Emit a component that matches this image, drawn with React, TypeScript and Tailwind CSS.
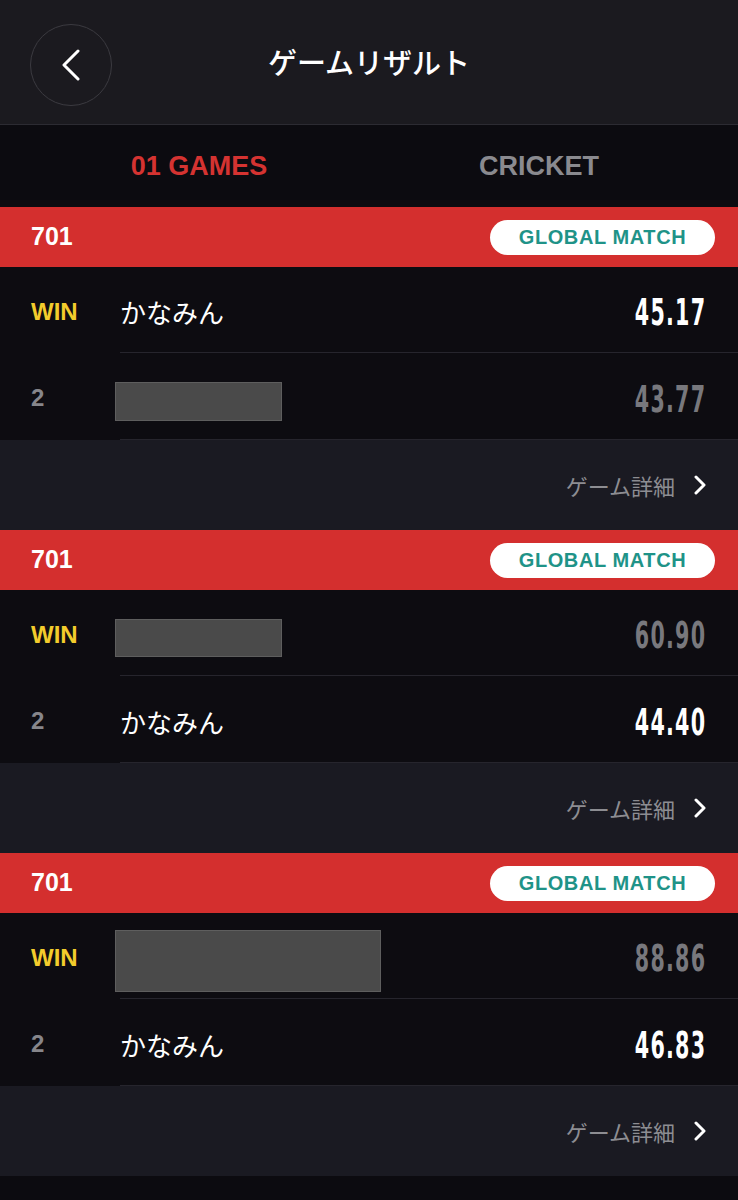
import React from "react";

type Player = {
  rank: "WIN" | "2";
  name: string | null;
  hiddenWidth?: number;
  hiddenHeight?: number;
  score: string;
  me: boolean;
};

type Game = {
  id: string;
  title: string;
  players: Player[];
};

const games: Game[] = [
  {
    id: "g1",
    title: "701",
    players: [
      { rank: "WIN", name: "かなみん", score: "45.17", me: true },
      { rank: "2", name: null, hiddenWidth: 167, hiddenHeight: 39, score: "43.77", me: false },
    ],
  },
  {
    id: "g2",
    title: "701",
    players: [
      { rank: "WIN", name: null, hiddenWidth: 167, hiddenHeight: 38, score: "60.90", me: false },
      { rank: "2", name: "かなみん", score: "44.40", me: true },
    ],
  },
  {
    id: "g3",
    title: "701",
    players: [
      { rank: "WIN", name: null, hiddenWidth: 266, hiddenHeight: 62, score: "88.86", me: false },
      { rank: "2", name: "かなみん", score: "46.83", me: true },
    ],
  },
];

const jp = { fontFamily: '"Noto Sans CJK JP", "Noto Sans", sans-serif' };
const latin = { fontFamily: '"Liberation Sans", Arial, sans-serif' };
const narrow = { fontFamily: '"DejaVu Sans Condensed", "DejaVu Sans", sans-serif' };

function BackChevron({ className }: { className?: string }) {
  return (
    <svg viewBox="0 0 20 32" className={className} fill="none" stroke="currentColor" strokeWidth={3} strokeLinecap="round" strokeLinejoin="round">
      <path d="M17 2 L3 16 L17 30" />
    </svg>
  );
}

function NextChevron({ className }: { className?: string }) {
  return (
    <svg viewBox="0 0 14 20" className={className} fill="none" stroke="currentColor" strokeWidth={3} strokeLinecap="round" strokeLinejoin="round">
      <path d="M3 2 L11 10 L3 18" />
    </svg>
  );
}

function PlayerRow({ player, first }: { player: Player; first: boolean }) {
  return (
    <div className={`flex bg-[#0d0c11] ${first ? "h-[86px]" : "h-[87px]"}`}>
      <div className="flex w-[120px] shrink-0 items-center pl-[31px] pt-[3px]">
        <span
          style={latin}
          className={`text-[24px] font-bold ${player.rank === "WIN" ? "text-[#f3cc2c]" : "text-[#86868b]"}`}
        >
          {player.rank}
        </span>
      </div>
      <div className="flex flex-1 items-center justify-between border-b border-[#26252d] pr-[32px]">
        {player.name ? (
          <span style={jp} className="pt-[4px] text-[26px] text-white">
            {player.name}
          </span>
        ) : (
          <div
            className="-ml-[5px] mt-[10px] border border-[#5e5e5e] bg-[#4a4a4a]"
            style={{ width: player.hiddenWidth, height: player.hiddenHeight }}
          />
        )}
        <span
          style={narrow}
          className={`mt-[7px] origin-right scale-x-[0.62] text-[37px] font-bold tracking-[2px] ${player.me ? "text-white" : "text-[#78787d]"}`}
        >
          {player.score}
        </span>
      </div>
    </div>
  );
}

function GameCard({ game }: { game: Game }) {
  return (
    <div>
      <div className="flex h-[60px] items-center justify-between bg-[#d42f2e] pl-[31px] pr-[23px]">
        <span style={latin} className="text-[25px] font-bold text-white">
          {game.title}
        </span>
        <span
          style={latin}
          className="flex h-[35px] w-[225px] items-center justify-center rounded-full bg-white text-[20px] font-bold tracking-[0.6px] text-[#1f9388]"
        >
          GLOBAL MATCH
        </span>
      </div>
      {game.players.map((p, i) => (
        <PlayerRow key={i} player={p} first={i === 0} />
      ))}
      <div className="flex h-[90px] items-center justify-end bg-[#1a1a22] pr-[31px]">
        <span style={jp} className="text-[22px] text-[#8d8d92]">
          ゲーム詳細
        </span>
        <NextChevron className="ml-[18px] h-[20px] w-[14px] text-white" />
      </div>
    </div>
  );
}

export default function App() {
  return (
    <div className="min-h-[1200px] w-[738px] bg-[#0c0b10]">
      <div className="relative flex h-[125px] items-center justify-center border-b border-[#2c2b32] bg-[#1b1a1f]">
        <button
          type="button"
          className="absolute left-[30px] top-[24px] flex h-[82px] w-[82px] items-center justify-center rounded-full border border-[#3b3a40] text-white"
        >
          <BackChevron className="h-[32px] w-[20px]" />
        </button>
        <h1 style={jp} className="text-[29px] font-medium text-white">
          ゲームリザルト
        </h1>
      </div>
      <div className="flex h-[82px] items-center px-[29px]">
        <div style={latin} className="flex-1 text-center text-[27px] font-bold text-[#d53331]">
          01 GAMES
        </div>
        <div style={latin} className="flex-1 text-center text-[27px] font-bold text-[#8a8a8f]">
          CRICKET
        </div>
      </div>
      {games.map((g) => (
        <GameCard key={g.id} game={g} />
      ))}
    </div>
  );
}
